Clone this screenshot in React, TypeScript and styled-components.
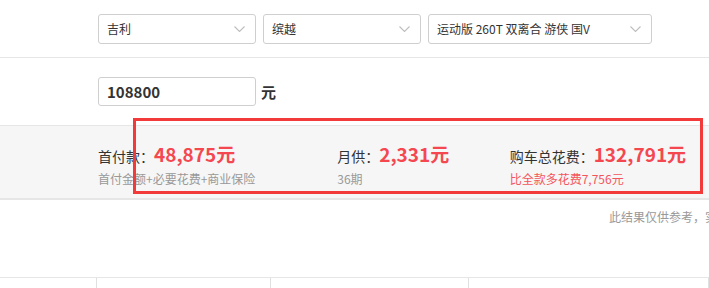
import React from 'react'
import styled, { createGlobalStyle } from 'styled-components'

const GlobalStyle = createGlobalStyle`
  html, body {
    margin: 0;
    padding: 0;
    background: #ffffff;
    overflow: hidden;
  }
  body {
    font-family: "Noto Sans CJK SC", "Liberation Sans", sans-serif;
    color: #333;
  }
`;

const Chevron = () => (
  <svg width="11" height="6" viewBox="0 0 11 6" fill="none">
    <path d="M0.5 0.5 L5.5 5.5 L10.5 0.5" stroke="#bdbdbd" strokeWidth="1.1" />
  </svg>
)

const selects = [
  { value: '吉利', width: 158 },
  { value: '缤越', width: 158 },
  { value: '运动版 260T 双离合 游侠 国V', width: 224 },
]

const results = [
  { label: '首付款', value: '48,875元', note: '首付金额+必要花费+商业保险', warn: false, width: 240 },
  { label: '月供', value: '2,331元', note: '36期', warn: false, width: 173 },
  { label: '购车总花费', value: '132,791元', note: '比全款多花费7,756元', warn: true, width: 200 },
]

const App: React.FC = () => {
  return (
    <>
      <GlobalStyle />
      <Page>
        <SelectRow>
          {selects.map((s) => (
            <SelectBox key={s.value} width={s.width}>
              <span>{s.value}</span>
              <Chevron />
            </SelectBox>
          ))}
        </SelectRow>
        <PriceRow>
          <PriceInput>108800</PriceInput>
          <Unit>元</Unit>
        </PriceRow>
        <ResultBand>
          {results.map((r) => (
            <ResultItem key={r.label} width={r.width}>
              <ResultLine>
                <ResultLabel>{r.label}：</ResultLabel>
                <ResultValue>{r.value}</ResultValue>
              </ResultLine>
              <ResultNote warn={r.warn}>{r.note}</ResultNote>
            </ResultItem>
          ))}
          <Highlight />
        </ResultBand>
        <Disclaimer>此结果仅供参考，实际应缴费以当地为准</Disclaimer>
        <TableHead>
          <TableCell width={97} />
          <TableCell width={174} />
          <TableCell width={198} />
          <TableCell width={240} />
        </TableHead>
      </Page>
    </>
  )
}

export default App

const Page = styled.div`
  position: relative;
  width: 709px;
  height: 288px;
  overflow: hidden;
`;

const SelectRow = styled.div`
  display: flex;
  align-items: center;
  gap: 7px;
  height: 57px;
  padding-left: 98px;
  border-bottom: 1px solid #e6e6e6;
`;

const SelectBox = styled.div<{ width: number }>`
  display: flex;
  align-items: center;
  justify-content: space-between;
  box-sizing: border-box;
  width: ${props => props.width}px;
  height: 30px;
  padding: 0 10px 0 8px;
  border: 1px solid #cfcfcf;
  border-radius: 3px;
  font-size: 12px;
  color: #333;
  background: #fff;
`;

const PriceRow = styled.div`
  display: flex;
  align-items: center;
  height: 67px;
  padding-left: 98px;
`;

const PriceInput = styled.div`
  display: flex;
  align-items: center;
  box-sizing: border-box;
  width: 158px;
  height: 29px;
  padding-left: 8px;
  border: 1px solid #cfcfcf;
  border-radius: 3px;
  font-size: 15px;
  font-weight: 700;
  color: #333;
`;

const Unit = styled.span`
  margin-left: 5px;
  font-size: 15px;
  font-weight: 700;
  color: #333;
`;

const ResultBand = styled.div`
  position: relative;
  display: flex;
  height: 72px;
  padding-left: 98px;
  background: #f6f6f6;
  border-top: 1px solid #e6e6e6;
  border-bottom: 2px solid #e6e6e6;
`;

const ResultItem = styled.div<{ width: number }>`
  display: flex;
  flex-direction: column;
  width: ${props => props.width}px;
  padding-top: 14px;
`;

const ResultLine = styled.div`
  display: flex;
  align-items: baseline;
  height: 24px;
`;

const ResultLabel = styled.span`
  font-size: 14px;
  color: #333;
`;

const ResultValue = styled.span`
  font-size: 19px;
  font-weight: 700;
  color: #f4474f;
`;

const ResultNote = styled.div<{ warn: boolean }>`
  margin-top: 6px;
  font-size: 12px;
  color: ${props => (props.warn ? '#f4555c' : '#999')};
`;

const Highlight = styled.div`
  position: absolute;
  left: 133px;
  top: -8px;
  width: 570px;
  height: 76px;
  box-sizing: border-box;
  border: 3px solid #f23a3a;
  pointer-events: none;
`;

const Disclaimer = styled.div`
  height: 77px;
  padding: 8px 0 0 609px;
  box-sizing: border-box;
  font-size: 12px;
  color: #999;
  white-space: nowrap;
`;

const TableHead = styled.div`
  display: flex;
  height: 12px;
  border-top: 1px solid #e6e6e6;
`;

const TableCell = styled.div<{ width: number }>`
  width: ${props => props.width}px;
  border-right: 1px solid #e0e0e0;
`;
